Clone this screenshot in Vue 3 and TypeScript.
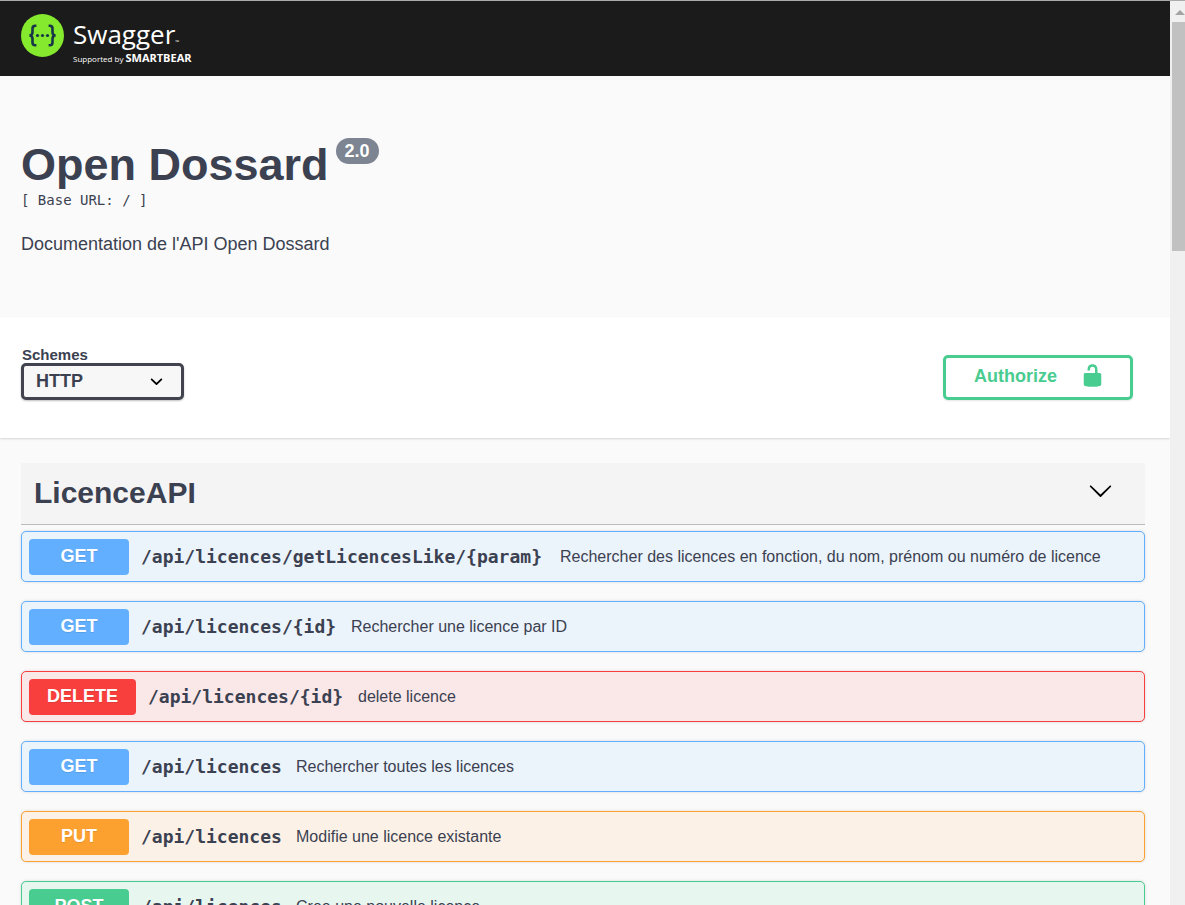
<script setup lang="ts">
import { ref } from 'vue'

type Method = 'get' | 'delete' | 'put' | 'post'

interface Operation {
  method: Method
  path: string
  summary: string
}

const PATH_CHARACTER_WIDTH = 11

const scheme = ref('http')
const expanded = ref(true)

const operations: Operation[] = [
  {
    method: 'get',
    path: '/api/licences/getLicencesLike/{param}',
    summary: 'Rechercher des licences en fonction, du nom, prénom ou numéro de licence',
  },
  { method: 'get', path: '/api/licences/{id}', summary: 'Rechercher une licence par ID' },
  { method: 'delete', path: '/api/licences/{id}', summary: 'delete licence' },
  { method: 'get', path: '/api/licences', summary: 'Rechercher toutes les licences' },
  { method: 'put', path: '/api/licences', summary: 'Modifie une licence existante' },
  { method: 'post', path: '/api/licences', summary: 'Cree une nouvelle licence' },
]
</script>

<template>
  <div class="window">
    <div class="page">
      <header class="topbar">
        <a class="brand" href="#" aria-label="Swagger">
          <svg class="brand-mark" viewBox="0 0 43 43" aria-hidden="true">
            <circle cx="21.5" cy="21.5" r="21.5" fill="#85ea2d" />
            <g fill="none" stroke="#173647" stroke-width="2.6">
              <path d="M15.4 11.8h-1.2c-1.9 0-2.7 1-2.7 2.8v3.6c0 2-.8 3.100-3 3.300 2.200.2 3 1.300 3 3.300v3.600c0 1.800.8 2.800 2.700 2.800h1.200" />
              <path d="M27.600 11.800h1.200c1.900 0 2.700 1 2.700 2.800v3.600c0 2 .8 3.100 3 3.300-2.200.2-3 1.300-3 3.300v3.600c0 1.800-.8 2.800-2.700 2.800h-1.200" />
            </g>
            <g fill="#173647">
              <circle cx="16.500" cy="21.500" r="1.600" />
              <circle cx="21.500" cy="21.500" r="1.600" />
              <circle cx="26.500" cy="21.500" r="1.600" />
            </g>
          </svg>
          <span class="brand-text">
            <span class="brand-name">Swagger<small>™</small></span>
            <span class="brand-owner">Supported by <b>SMARTBEAR</b></span>
          </span>
        </a>
      </header>

      <section class="info">
        <h1>Open Dossard <span class="version">2.0</span></h1>
        <pre class="base-url">[ Base URL: / ]</pre>
        <p>Documentation de l'API Open Dossard</p>
      </section>

      <section class="schemes">
        <div class="scheme-field">
          <label for="scheme">Schemes</label>
          <div class="select-box">
            <select id="scheme" v-model="scheme">
              <option value="http">HTTP</option>
            </select>
            <svg viewBox="0 0 20 20" aria-hidden="true">
              <path d="M13.418 7.859c.271-.268.709-.268.978 0 .27.268.272.701 0 .969l-3.908 3.830c-.27.268-.707.268-.979 0l-3.908-3.830c-.27-.267-.27-.701 0-.969.271-.268.709-.268.978 0L10 11l3.418-3.141z" />
            </svg>
          </div>
        </div>
        <button class="authorize" type="button">
          <span>Authorize</span>
          <svg viewBox="0 0 20 20" aria-hidden="true">
            <path d="M15.800 8H14V5.600C14 2.703 12.665 1 10 1 7.334 1 6 2.703 6 5.600V6h2v-.801C8 3.754 8.797 3 10 3c1.203 0 2 .754 2 2.199V8H4c-.553 0-1 .646-1 1.199V17c0 .549.428 1.139.951 1.307l1.197.387C5.672 18.861 6.550 19 7.100 19h5.800c.549 0 1.428-.139 1.951-.307l1.196-.387c.524-.167.953-.757.953-1.306V9.199C17 8.646 16.352 8 15.800 8z" />
          </svg>
        </button>
      </section>

      <main class="operations">
        <div class="tag">
          <h2>LicenceAPI</h2>
          <button type="button" aria-label="LicenceAPI" :aria-expanded="expanded" @click="expanded = !expanded">
            <svg viewBox="0 0 20 20" aria-hidden="true">
              <path d="M17.418 6.109c.272-.268.709-.268.979 0s.271.701 0 .969l-7.908 7.830c-.27.268-.707.268-.979 0l-7.908-7.830c-.27-.268-.27-.701 0-.969.271-.268.709-.268.979 0L10 13.250l7.418-7.141z" />
            </svg>
          </button>
        </div>
        <template v-if="expanded">
          <button
            v-for="operation in operations"
            :key="operation.method + operation.path"
            type="button"
            class="operation"
            :class="operation.method"
          >
            <span class="method">{{ operation.method.toUpperCase() }}</span>
            <span class="path" :style="{ width: operation.path.length * PATH_CHARACTER_WIDTH + 'px' }">{{ operation.path }}</span>
            <span class="summary">{{ operation.summary }}</span>
          </button>
        </template>
      </main>
    </div>

    <div class="scrollbar" aria-hidden="true">
      <svg viewBox="0 0 10 5"><path d="M0 5 5 0l5 5z" /></svg>
      <div class="thumb"></div>
    </div>
  </div>
</template>

<style>
body {
  margin: 0;
  background: #fafafa;
}
</style>

<style scoped>
* {
  box-sizing: border-box;
}

.window {
  display: flex;
  height: 100vh;
  overflow: hidden;
  border-top: 1px solid #a9abab;
  color: #3b4151;
  font-family: "Liberation Sans", Arial, sans-serif;
}

.page {
  flex: 1;
  min-width: 0;
}

button {
  font-family: inherit;
  color: inherit;
  cursor: pointer;
}

.topbar {
  height: 75px;
  padding: 13px 21px 0;
  background: #1b1b1b;
}

.brand {
  display: inline-flex;
  gap: 9px;
  color: #fff;
  text-decoration: none;
  font-family: "Open Sans", sans-serif;
}

.brand-mark {
  width: 43px;
  height: 43px;
}

.brand-text {
  display: flex;
  flex-direction: column;
  padding-top: 4px;
}

.brand-name {
  height: 33px;
  font-size: 26px;
  line-height: 33px;
}

.brand-name small {
  font-size: 5px;
}

.brand-owner {
  height: 14px;
  font-size: 8px;
  line-height: 14px;
}

.brand-owner b {
  font-size: 11px;
  line-height: 14px;
}

.info {
  height: 241px;
  padding: 62px 21px 0;
}

h1 {
  display: flex;
  align-items: flex-start;
  gap: 7px;
  margin: 0;
  font-size: 45px;
  line-height: 54px;
}

.version {
  padding: 0 9px;
  border-radius: 13px;
  background: #7d8492;
  color: #fff;
  font-size: 18px;
  line-height: 26px;
}

.base-url {
  margin: 0;
  font-family: "DejaVu Sans Mono", monospace;
  font-size: 14px;
  line-height: 16px;
}

.info p {
  margin: 26px 0 0;
  font-size: 18px;
  line-height: 21px;
}

.schemes {
  display: flex;
  align-items: flex-start;
  justify-content: space-between;
  height: 121px;
  padding: 29px 37px 0 21px;
  background: #fff;
  box-shadow: 0 1px 2px rgba(0, 0, 0, 0.15);
}

.scheme-field label {
  display: block;
  padding-left: 1px;
  font-size: 15px;
  font-weight: 700;
  line-height: 17px;
}

.select-box {
  position: relative;
  width: 163px;
}

.select-box select {
  display: block;
  width: 100%;
  height: 37px;
  padding: 0 40px 2px 12px;
  border: 3px solid #41444e;
  border-radius: 5px;
  background: #f7f7f7;
  box-shadow: 0 1px 2px rgba(0, 0, 0, 0.25);
  appearance: none;
  color: #3b4151;
  font: 700 18px "Liberation Sans", Arial, sans-serif;
}

.select-box svg {
  position: absolute;
  top: 6px;
  right: 15px;
  width: 25px;
  height: 25px;
  pointer-events: none;
}

.authorize {
  display: flex;
  align-items: flex-start;
  justify-content: space-between;
  width: 190px;
  height: 45px;
  margin-top: 9px;
  padding: 5px 25px 0 28px;
  border: 3px solid #49cc90;
  border-radius: 5px;
  background: transparent;
  box-shadow: 0 1px 2px rgba(0, 0, 0, 0.1);
  color: #49cc90;
  font-size: 18px;
  font-weight: 700;
  line-height: 26px;
}

.authorize svg {
  width: 25px;
  height: 25px;
  fill: currentColor;
}

.operations {
  display: flex;
  flex-direction: column;
  padding: 25px 25px 0 21px;
}

.tag {
  display: flex;
  align-items: flex-start;
  justify-content: space-between;
  height: 62px;
  padding: 12px 32px 0 13px;
  margin-bottom: 6px;
  border-bottom: 1px solid #bbbcc0;
  background: #f4f4f4;
}

.tag h2 {
  margin: 0;
  font-size: 30px;
  line-height: 36px;
}

.tag button {
  margin-top: 3px;
  padding: 0;
  border: 0;
  background: none;
}

.tag svg {
  display: block;
  width: 25px;
  height: 25px;
}

.operation {
  display: flex;
  align-items: center;
  height: 51px;
  margin: 0 0 19px;
  padding: 0 7px;
  border: 1px solid var(--accent);
  border-radius: 5px;
  background: var(--tint);
  box-shadow: 0 0 3px rgba(0, 0, 0, 0.15);
  text-align: left;
}

.get {
  --accent: #61affe;
  --tint: #ebf3fb;
}

.delete {
  --accent: #f93e3e;
  --tint: #fae7e7;
}

.put {
  --accent: #fca130;
  --tint: #fbf1e6;
}

.post {
  --accent: #49cc90;
  --tint: #e8f6f0;
}

.method {
  flex: none;
  min-width: 100px;
  height: 36px;
  padding: 0 18px;
  border-radius: 4px;
  background: var(--accent);
  color: #fff;
  font-size: 18px;
  font-weight: 700;
  line-height: 35px;
  text-align: center;
  text-shadow: 0 1px 0 rgba(0, 0, 0, 0.1);
}

.path {
  flex: none;
  margin: 0 12px;
  font-family: "DejaVu Sans Mono", monospace;
  font-size: 18px;
  font-weight: 700;
  line-height: 24px;
}

.summary {
  font-size: 16px;
  line-height: 20px;
}

.scrollbar {
  flex: none;
  width: 15px;
  padding: 9px 0 0 2px;
  background: #f0f0f0;
}

.scrollbar svg {
  display: block;
  width: 10px;
  height: 5px;
  margin: 0 0 7px 3px;
  fill: #a3a3a3;
}

.thumb {
  height: 229px;
  background: #c1c1c1;
}
</style>
